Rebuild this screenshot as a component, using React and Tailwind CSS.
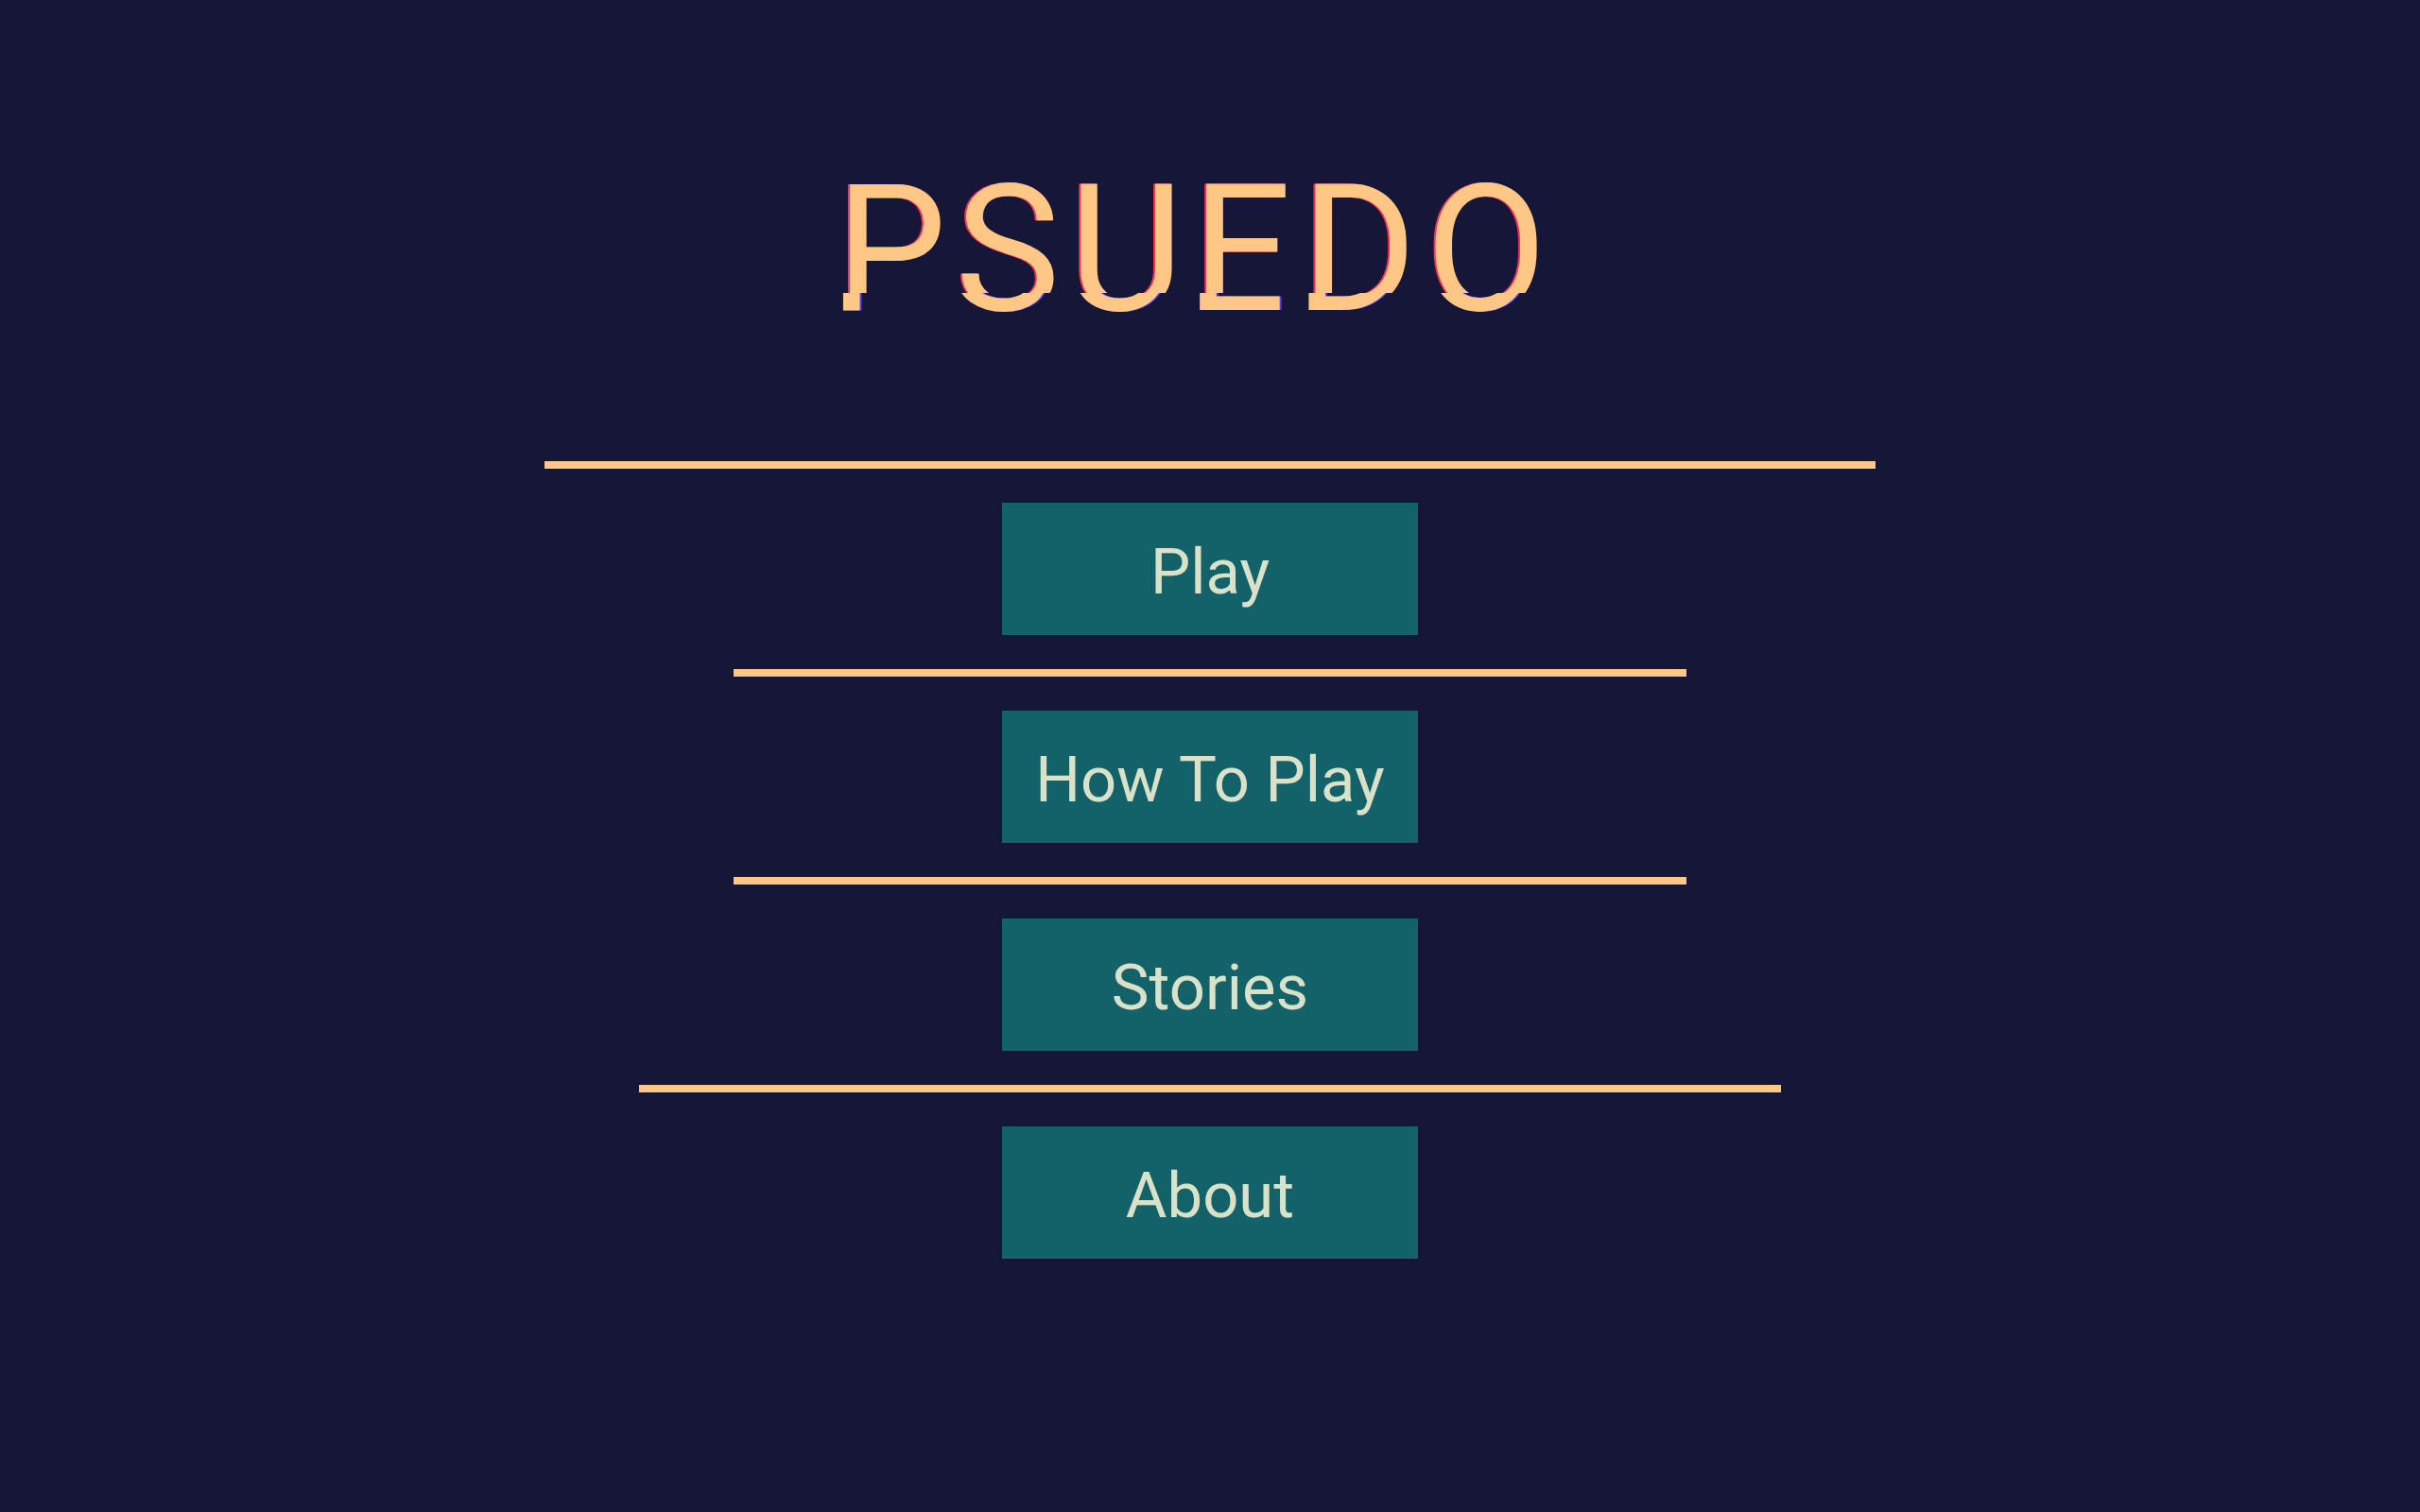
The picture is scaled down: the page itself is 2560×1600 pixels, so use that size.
import React from 'react';

const menu = [
    { label: 'Play', line: 'w-[1408px]' },
    { label: 'How To Play', line: 'w-[1008px]' },
    { label: 'Stories', line: 'w-[1008px]' },
    { label: 'About', line: 'w-[1208px]' },
];

// Title with a sliced "glitch" look: top slice in place, bottom slice (pseudo element) nudged left
const GlitchTitle = ({ text }) => (
    <h1
        data-text={text}
        className="relative inline-block pl-[9px] text-[187px] leading-[187px] font-normal text-[#ffc785] tracking-[9px] select-none after:absolute after:left-[9px] after:top-0 after:block after:content-[attr(data-text)] after:-translate-x-[7px] after:[clip-path:inset(74.3%_0_0_0)] after:[text-shadow:2px_0_#4b3bff]"
    >
        <span className="block [clip-path:inset(0_0_25.7%_0)] [text-shadow:-2px_0_#ff2a55]">{text}</span>
    </h1>
);

const App = () => {
    return (
        <div className="min-h-screen w-full bg-[#161639] font-['Roboto','Liberation_Sans',sans-serif] flex flex-col items-center">
            <div className="mt-[171px] pr-[40px]">
                <GlitchTitle text="PSUEDO" />
            </div>

            <div className="mt-[130px] flex flex-col items-center gap-9">
                {menu.map((item) => (
                    <React.Fragment key={item.label}>
                        <div className={`h-2 bg-[#ffc785] ${item.line}`} />
                        <button className="w-[440px] h-[140px] pt-[6px] bg-[#136169] text-[#d9e2c8] text-[67px] leading-none flex items-center justify-center">
                            {item.label}
                        </button>
                    </React.Fragment>
                ))}
            </div>
        </div>
    );
};

export default App;
